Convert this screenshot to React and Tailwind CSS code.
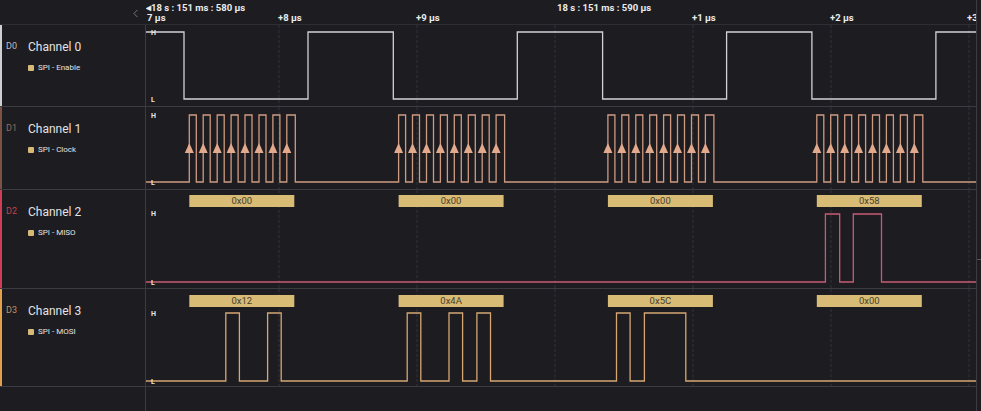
import { ChevronLeft } from 'lucide-react';

const W = 830;
const BIT = 13.93;
const BURSTS = [189.3, 398.6, 607.9, 816.8].map((x) => x - 146);
const GRID = [279, 417, 555, 693, 831, 969].map((x) => x - 146);

function clockPath(hi, lo) {
    let d = `M0 ${lo}`;
    BURSTS.forEach((s) => {
        for (let i = 0; i < 8; i++) {
            const r = s + i * BIT;
            const f = r + (i === 7 ? 8.5 : 7);
            d += ` H${r.toFixed(1)} V${hi} H${f.toFixed(1)} V${lo}`;
        }
    });
    return d + ` H${W}`;
}

function dataPath(bytes, hi, lo, tail = 8.3) {
    let d = `M0 ${lo}`;
    bytes.forEach((b, k) => {
        const s = BURSTS[k];
        let i = 0;
        while (i < 8) {
            if (b & (0x80 >> i)) {
                let j = i;
                while (j < 7 && b & (0x80 >> (j + 1))) j++;
                const a = s + i * BIT - 5.3;
                const e = s + j * BIT + tail;
                d += ` H${a.toFixed(1)} V${hi} H${e.toFixed(1)} V${lo}`;
                i = j + 1;
            } else i++;
        }
    });
    return d + ` H${W}`;
}

function Grid({ h }) {
    return GRID.map((x) => (
        <line key={x} x1={x} x2={x} y1={0} y2={h} stroke="#34333a" strokeWidth="1" strokeDasharray="3 2" />
    ));
}

function Level({ y, t }) {
    return (
        <text x="5" y={y + 2.5} fontSize="7" fontWeight="700" fill="#e6e6e6" fontFamily="Roboto, sans-serif">
            {t}
        </text>
    );
}

function Bars({ labels, y }) {
    return labels.map((l, k) => (
        <g key={k}>
            <rect x={BURSTS[k]} y={y} width="105" height="12" fill="#d8bb74" />
            <text
                x={BURSTS[k] + 52.5}
                y={y + 9.3}
                textAnchor="middle"
                fontSize="9.5"
                fill="#4b4130"
                fontFamily="Roboto, sans-serif"
            >
                {l}
            </text>
        </g>
    ));
}

function Row({ id, name, sub, strip, idColor, h, children }) {
    return (
        <div className="flex border-b border-[#3c3b41]" style={{ height: h }}>
            <div className="w-[146px] flex border-r border-[#3c3b41]">
                <div className="w-[2px]" style={{ background: strip }} />
                <div className="flex flex-col pt-[14px]">
                    <div className="flex items-center h-[15px]">
                        <span className="w-[26px] pl-[4px] text-[9px]" style={{ color: idColor }}>
                            {id}
                        </span>
                        <span className="text-[12px] text-[#e2e2e4]">{name}</span>
                    </div>
                    <div className="flex items-center mt-[8px] pl-[26px]">
                        <span className="w-[6px] h-[6px] rounded-[1px] bg-[#d6b977] mr-[4px]" />
                        <span className="text-[8px] text-[#e2e2e4]">{sub}</span>
                    </div>
                </div>
            </div>
            <svg width={W} height={h - 1} className="block">
                <Grid h={h - 1} />
                {children}
            </svg>
        </div>
    );
}

function Tick({ left, top, children }) {
    return (
        <span className="absolute text-[9.5px] font-bold text-[#ececee] whitespace-nowrap leading-none" style={{ left, top }}>
            {children}
        </span>
    );
}

export default function App() {
    const arrows = [];
    BURSTS.forEach((s) => {
        for (let i = 0; i < 8; i++) {
            const x = s + i * BIT;
            arrows.push(`M${(x - 4.5).toFixed(1)} 46 L${x.toFixed(1)} 36 L${(x + 4.5).toFixed(1)} 46 Z`);
        }
    });

    const ch0 = (() => {
        let d = 'M0 7';
        for (let k = 0; k < 4; k++) {
            const f = 184 + k * 209.3 - 146;
            const r = 308 + k * 209.3 - 146;
            d += ` H${f.toFixed(1)} V74 H${r.toFixed(1)} V7`;
        }
        return d + ` H${W}`;
    })();

    return (
        <div className="w-[981px] h-[411px] bg-[#1d1c20] overflow-hidden flex font-['Roboto',sans-serif]">
            <div className="w-[976px] flex flex-col">
                <div className="h-[25px] flex border-b border-[#2e2d33]">
                    <div className="w-[146px] flex justify-end items-center pr-[4px] pt-[2px]">
                        <ChevronLeft size={13} strokeWidth={1.5} className="text-[#8a8a90]" />
                    </div>
                    <div className="relative flex-1 overflow-hidden">
                        <Tick left={0} top={3}>◂18 s : 151 ms : 580 µs</Tick>
                        <Tick left={1} top={13}>7 µs</Tick>
                        <Tick left={132} top={13}>+8 µs</Tick>
                        <Tick left={270} top={13}>+9 µs</Tick>
                        <Tick left={411} top={3}>18 s : 151 ms : 590 µs</Tick>
                        <Tick left={546} top={13}>+1 µs</Tick>
                        <Tick left={684} top={13}>+2 µs</Tick>
                        <Tick left={821} top={13}>+3</Tick>
                    </div>
                </div>

                <Row id="D0" name="Channel 0" sub="SPI - Enable" strip="#cfcfd2" idColor="#bdbdc2" h={82}>
                    <path d={ch0} fill="none" stroke="#d2d2d6" strokeWidth="1.3" />
                    <Level y={7} t="H" />
                    <Level y={74} t="L" />
                </Row>

                <Row id="D1" name="Channel 1" sub="SPI - Clock" strip="#7c5244" idColor="#9a6b5a" h={83}>
                    <path d={clockPath(8, 75)} fill="none" stroke="#cf9a82" strokeWidth="1.3" />
                    {arrows.map((d, i) => (
                        <path key={i} d={d} fill="#e2a98c" />
                    ))}
                    <Level y={8} t="H" />
                    <Level y={75} t="L" />
                </Row>

                <Row id="D2" name="Channel 2" sub="SPI - MISO" strip="#d03e55" idColor="#c8404f" h={99}>
                    <Bars labels={['0x00', '0x00', '0x00', '0x58']} y={5} />
                    <path d={dataPath([0x00, 0x00, 0x00, 0x58], 24, 92, 9)} fill="none" stroke="#c65c73" strokeWidth="1.3" />
                    <Level y={23} t="H" />
                    <Level y={92} t="L" />
                </Row>

                <Row id="D3" name="Channel 3" sub="SPI - MOSI" strip="#e2a04a" idColor="#c49062" h={98}>
                    <Bars labels={['0x12', '0x4A', '0x5C', '0x00']} y={6} />
                    <path d={dataPath([0x12, 0x4a, 0x5c, 0x00], 24, 92)} fill="none" stroke="#d6a673" strokeWidth="1.3" />
                    <Level y={24} t="H" />
                    <Level y={92} t="L" />
                </Row>

                <div className="flex-1 flex">
                    <div className="w-[146px] border-r border-[#3c3b41]" />
                </div>
            </div>
            <div className="w-[5px] border-l border-[#3c3b41] flex flex-col">
                <div className="mt-[259px] h-[1px] bg-[#55545a]" />
            </div>
        </div>
    );
}
